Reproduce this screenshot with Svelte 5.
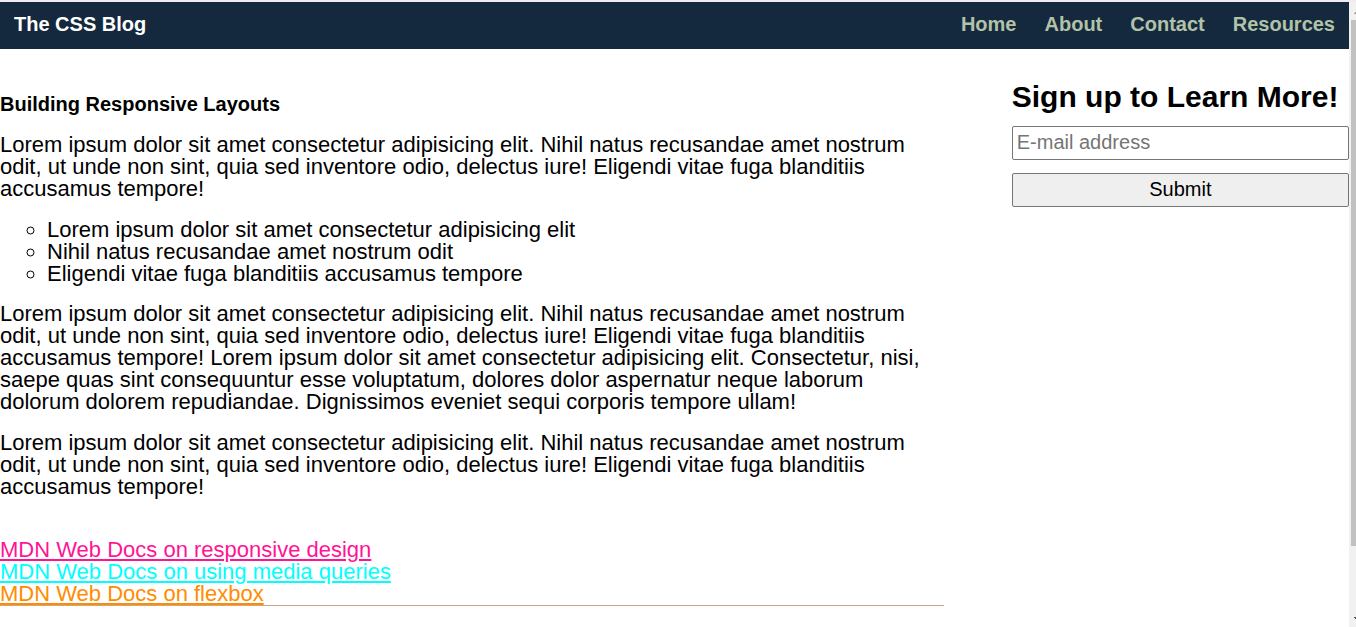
<script>
  const nav = ['Home', 'About', 'Contact', 'Resources'];
  const intro =
    'Lorem ipsum dolor sit amet consectetur adipisicing elit. Nihil natus recusandae amet nostrum odit, ut unde non sint, quia sed inventore odio, delectus iure! Eligendi vitae fuga blanditiis accusamus tempore!';
  const more =
    'Lorem ipsum dolor sit amet consectetur adipisicing elit. Consectetur, nisi, saepe quas sint consequuntur esse voluptatum, dolores dolor aspernatur neque laborum dolorum dolorem repudiandae. Dignissimos eveniet sequi corporis tempore ullam!';
  const points = [
    'Lorem ipsum dolor sit amet consectetur adipisicing elit',
    'Nihil natus recusandae amet nostrum odit',
    'Eligendi vitae fuga blanditiis accusamus tempore'
  ];
  let email = $state('');
</script>

<div class="window">
  <div class="page">
    <header>
      <span class="brand">The CSS Blog</span>
      <nav>
        {#each nav as item}
          <a href="#{item.toLowerCase()}">{item}</a>
        {/each}
      </nav>
    </header>

    <div class="content">
      <main>
        <article>
          <h1>Building Responsive Layouts</h1>
          <p>{intro}</p>
          <ul>
            {#each points as point}
              <li>{point}</li>
            {/each}
          </ul>
          <p>{intro} {more}</p>
          <p>{intro}</p>
        </article>
        <div class="links">
          <a class="pink" href="#responsive">MDN Web Docs on responsive design</a>
          <a class="cyan" href="#media">MDN Web Docs on using media queries</a>
          <a class="orange" href="#flexbox">MDN Web Docs on flexbox</a>
        </div>
      </main>

      <aside>
        <h2>Sign up to Learn More!</h2>
        <form onsubmit={(e) => e.preventDefault()}>
          <input type="email" aria-label="E-mail address" placeholder="E-mail address" bind:value={email} />
          <button type="submit">Submit</button>
        </form>
      </aside>
    </div>
  </div>

  <div class="scrollbar" aria-hidden="true">
    <svg class="arrow" viewBox="0 0 7 18"><path d="M6 10h1v1h-1zM5 11h2v1H5z" fill="#a3a3a3" /></svg>
    <div class="thumb"></div>
    <div class="rest"></div>
    <svg class="arrow" viewBox="0 0 7 18"><path d="M5 8h2v2H6V9H5z" fill="#505050" /></svg>
  </div>
</div>

<style>
  :global(body) {
    margin: 0;
    background: #fff;
  }

  .window {
    display: flex;
    min-height: 100vh;
    box-sizing: border-box;
    border-top: 2px solid #eeebf4;
    font-family: 'Liberation Sans', Arial, sans-serif;
    font-size: 22px;
    line-height: 22px;
    color: #000;
  }

  .page {
    flex: 1;
    min-width: 0;
  }

  header {
    display: flex;
    justify-content: space-between;
    padding: 11px 14px 14px;
    background: #14293d;
    font-size: 20px;
    font-weight: bold;
  }

  .brand {
    color: #fff;
  }

  nav {
    display: flex;
    gap: 28px;
  }

  nav a {
    color: #b2c2a9;
    text-decoration: none;
  }

  .content {
    display: flex;
    justify-content: space-between;
    align-items: flex-start;
  }

  main {
    width: 70%;
    padding-top: 44px;
    border-bottom: 1px solid #cfa685;
  }

  h1 {
    margin: 0;
    font-size: 20px;
  }

  p {
    margin: 19px 0;
  }

  ul {
    margin: 0;
    padding-left: 47px;
    list-style: circle;
  }

  ul + p {
    margin-top: 18px;
  }

  .links {
    display: flex;
    flex-direction: column;
    align-items: flex-start;
    padding-top: 22px;
  }

  .pink {
    color: #ff1493;
  }

  .cyan {
    color: #00ffff;
  }

  .orange {
    color: #ff8c00;
  }

  aside {
    width: 25%;
    padding-top: 32px;
  }

  h2 {
    margin: 0 0 13px;
    font-size: 30px;
    line-height: 32px;
    white-space: nowrap;
  }

  form {
    display: flex;
    flex-direction: column;
    gap: 13px;
  }

  input,
  button {
    box-sizing: border-box;
    width: 100%;
    height: 34px;
    padding: 1px 4px 3px;
    border: 1px solid #767676;
    border-radius: 2px;
    font-family: inherit;
    font-size: 20px;
    color: #000;
  }

  input {
    background: #fff;
  }

  input::placeholder {
    color: #757575;
  }

  button {
    background: #efefef;
  }

  .scrollbar {
    display: flex;
    flex-direction: column;
    width: 7px;
    background: #f1f1f1;
  }

  .arrow {
    display: block;
    width: 7px;
    height: 18px;
  }

  .thumb {
    flex: 526;
    margin-left: 2px;
    background: #c1c1c1;
  }

  .rest {
    flex: 63;
  }
</style>
